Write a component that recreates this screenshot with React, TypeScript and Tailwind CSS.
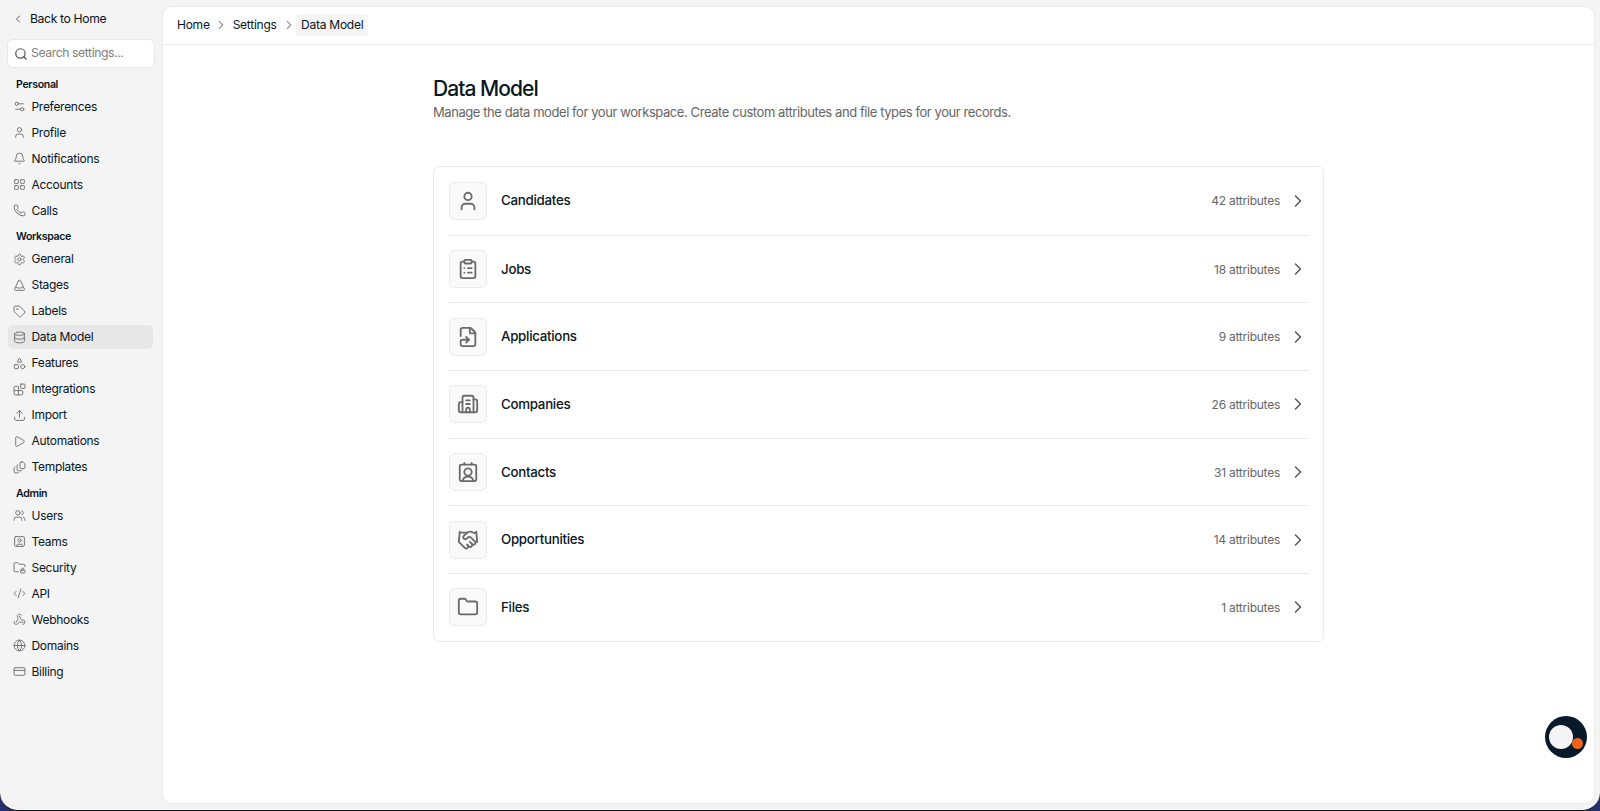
import {
  Bell, Blocks, ChevronLeft, ChevronRight, ClipboardList, CodeXml, CreditCard, Database,
  FileSymlink, Folder, FolderLock, Globe, Handshake, LayoutGrid, Phone, Play, Search, Settings,
  Settings2, SquareUser, Tag, Upload, User, Users, Webhook,
} from "lucide-react";
import type { ComponentType, ReactNode } from "react";

type IconType = ComponentType<{ className?: string; strokeWidth?: number }>;

function Svg({ className, strokeWidth = 2, children }: { className?: string; strokeWidth?: number; children: ReactNode }) {
  return (
    <svg viewBox="0 0 24 24" fill="none" stroke="currentColor" strokeWidth={strokeWidth} strokeLinecap="round" strokeLinejoin="round" className={className}>
      {children}
    </svg>
  );
}

const ConeIcon: IconType = (p) => (
  <Svg {...p}>
    <path d="M10 3.4 3 18.4A2 2 0 0 0 4.8 21h14.4a2 2 0 0 0 1.8-2.6L14 3.4a2.2 2.2 0 0 0-4 0Z" />
    <path d="M5.5 15c2.5 2.6 10.5 2.6 13 0" />
  </Svg>
);
const ShapesIcon: IconType = (p) => (
  <Svg {...p}>
    <path d="M10.9 3.5 8.2 8.6a.6.6 0 0 0 .5.9h6.6a.6.6 0 0 0 .5-.9l-2.7-5.1a1.2 1.2 0 0 0-2.2 0Z" />
    <rect x="2.5" y="14" width="7.5" height="7.5" rx="1.5" />
    <circle cx="18" cy="17.8" r="3.8" />
  </Svg>
);
const TemplatesIcon: IconType = (p) => (
  <Svg {...p}>
    <path d="M15 2h4l3 3v7a2 2 0 0 1-2 2h-5a2 2 0 0 1-2-2V4a2 2 0 0 1 2-2Z" />
    <path d="M9 6.5a2 2 0 0 0-1.5 2V16a2 2 0 0 0 2 2H15a2 2 0 0 0 1.7-1" />
    <path d="M3.5 11A2 2 0 0 0 2 13v7a2 2 0 0 0 2 2h5a2 2 0 0 0 1.7-1" />
  </Svg>
);
const CompanyIcon: IconType = (p) => (
  <Svg {...p}>
    <path d="M10 12h4M10 8h4M14 21v-3a2 2 0 0 0-4 0v3" />
    <path d="M6 10H4a2 2 0 0 0-2 2v7a2 2 0 0 0 2 2h16a2 2 0 0 0 2-2V9a2 2 0 0 0-2-2h-2" />
    <path d="M6 21V5a2 2 0 0 1 2-2h8a2 2 0 0 1 2 2v16" />
  </Svg>
);
const ContactIcon: IconType = (p) => (
  <Svg {...p}>
    <path d="M16 2v2M8 2v2M17.9 22a6 6 0 0 0-11.8 0" />
    <circle cx="12" cy="12" r="4" />
    <rect x="3" y="4" width="18" height="18" rx="2" />
  </Svg>
);

const groups: { title: string; items: [string, IconType][] }[] = [
  { title: "Personal", items: [["Preferences", Settings2], ["Profile", User], ["Notifications", Bell], ["Accounts", LayoutGrid], ["Calls", Phone]] },
  {
    title: "Workspace",
    items: [
      ["General", Settings], ["Stages", ConeIcon], ["Labels", Tag], ["Data Model", Database], ["Features", ShapesIcon],
      ["Integrations", Blocks], ["Import", Upload], ["Automations", Play], ["Templates", TemplatesIcon],
    ],
  },
  {
    title: "Admin",
    items: [
      ["Users", Users], ["Teams", SquareUser], ["Security", FolderLock], ["API", CodeXml], ["Webhooks", Webhook],
      ["Domains", Globe], ["Billing", CreditCard],
    ],
  },
];

const models: [string, number, IconType][] = [
  ["Candidates", 42, User], ["Jobs", 18, ClipboardList], ["Applications", 9, FileSymlink], ["Companies", 26, CompanyIcon],
  ["Contacts", 31, ContactIcon], ["Opportunities", 14, Handshake], ["Files", 1, Folder],
];

function Sidebar() {
  return (
    <aside className="flex w-[162px] shrink-0 flex-col pl-2 tracking-[-0.29px]">
      <div className="flex h-[38px] items-center gap-[5px] pl-1 text-[12.2px] tracking-[-0.36px]">
        <ChevronLeft className="size-3 text-[#555]" />
        <span className="ml-px">Back to Home</span>
      </div>
      <div className="-ml-px mb-[4px] mt-px flex h-[29px] w-[148px] shrink-0 items-center gap-[3px] rounded-md border border-[#e6e8ea] bg-white pl-[6px] text-[12.2px] tracking-[-0.4px] text-[#808080]">
        <Search className="size-[14px] text-[#555]" />
        Search settings...
      </div>
      {groups.map((g) => (
        <section key={g.title} className="flex flex-col gap-[2px] pb-[2px]">
          <h2 className="flex h-[20.5px] items-center pl-2 pt-[6px] text-[10.6px] font-semibold leading-none tracking-[-0.35px]">{g.title}</h2>
          {g.items.map(([label, Icon]) => (
            <div
              key={label}
              className={`flex h-6 w-[145px] items-center gap-[5.5px] rounded-[5px] pl-[5px] text-[12px] ${label === "Data Model" ? "bg-[#e7e7e7]" : ""}`}
            >
              <Icon className="size-[13px] text-[#707070]" strokeWidth={1.75} />
              <span className="pt-[0.5px]">{label}</span>
            </div>
          ))}
        </section>
      ))}
    </aside>
  );
}

export default function App() {
  return (
    <div className="relative h-[811px] w-[1600px] overflow-hidden bg-[#26306a] font-['Inter',sans-serif] text-[#081522]">
      <div className="flex h-[811px] rounded-b-[18px] border-b border-[#15161c] bg-[#f4f4f4]">
        <Sidebar />
        <main className="mb-[6px] mr-[5px] mt-[6px] flex flex-1 flex-col rounded-[10px] border border-[#ebebeb] bg-white">
          <header className="flex h-[38px] shrink-0 items-center border-b border-[#e9e9e9] pb-px pl-[14px] text-[12px] tracking-[-0.25px]">
            <span>Home</span>
            <ChevronRight className="mx-[4.5px] size-3.5 text-[#707070]" strokeWidth={1.75} />
            <span>Settings</span>
            <ChevronRight className="ml-[5px] mr-[0.5px] size-3.5 text-[#707070]" strokeWidth={1.75} />
            <span className="rounded bg-[#f5f5f5] px-[5px] py-[2px] leading-[18px]">Data Model</span>
          </header>
          <div className="flex flex-col pl-[270px] pt-[30px]">
            <h1 className="text-[21px] font-medium leading-[28px] tracking-[-0.95px]">Data Model</h1>
            <p className="-mt-px text-[13px] leading-[20px] tracking-[-0.425px] text-[#666]">
              Manage the data model for your workspace. Create custom attributes and file types for your records.
            </p>
            <div className="mt-[44px] w-[891px] rounded-md border border-[#e9eaeb] px-[15px]">
              {models.map(([name, count, Icon], i) => (
                <div key={name} className={`flex h-[67.7px] items-center ${i > 0 ? "border-t border-[#e6e8ea]" : ""}`}>
                  <div className="flex size-[38px] items-center justify-center rounded-md border border-[#e9eaeb] bg-[#fafafa]">
                    <Icon className="mr-px size-[22px] text-[#6b6b6b]" />
                  </div>
                  <span className="ml-[14px] pt-px text-[13.3px] font-medium tracking-[-0.27px]">{name}</span>
                  <span className="ml-auto pt-px text-[12px] tracking-[-0.25px] text-[#666]">{count} attributes</span>
                  <ChevronRight className="ml-[8px] size-5 text-[#555]" strokeWidth={1.75} />
                </div>
              ))}
            </div>
          </div>
        </main>
      </div>
      <div className="absolute left-[1545px] top-[716px] size-[42px] rounded-full bg-[#061a2c]">
        <div className="absolute left-1 top-[9px] size-6 rounded-full bg-[#f4f4f4]" />
        <div className="absolute left-[27px] top-[22px] size-[11px] rounded-full bg-[#f26414]" />
      </div>
    </div>
  );
}
